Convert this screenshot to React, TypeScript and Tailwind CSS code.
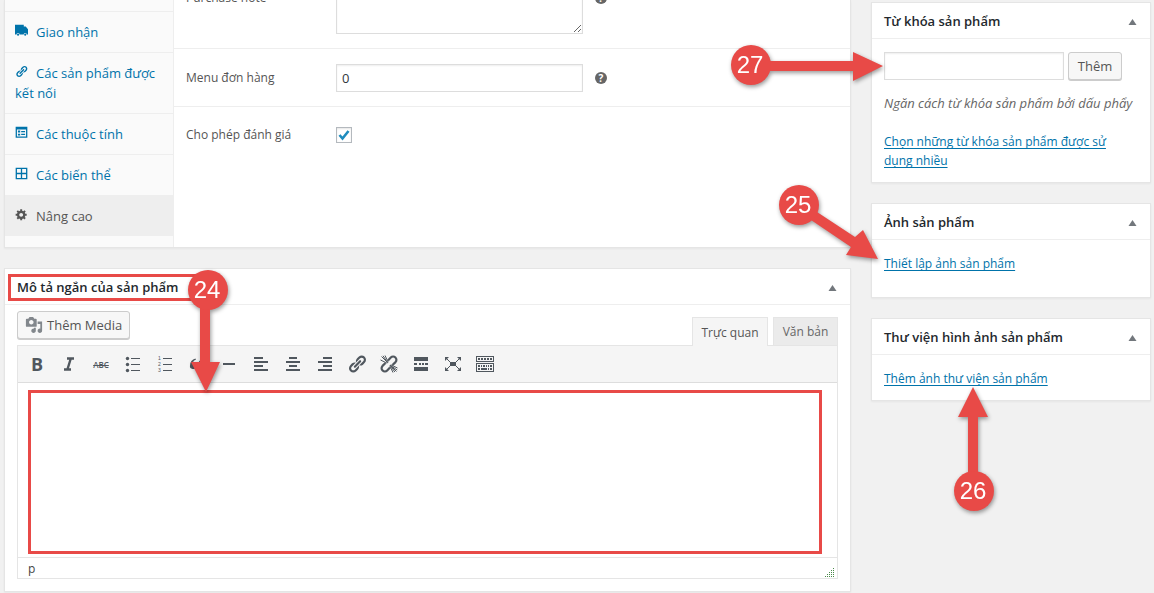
import React from "react";

interface IconProps {
  children: React.ReactNode;
  className?: string;
}

interface ChildrenProps {
  children: React.ReactNode;
}

const LINK_PATH =
  "M17.74 2.76c1.68 1.69 1.68 4.41 0 6.1l-1.53 1.52c-1.12 1.12-2.7 1.47-4.14 1.09l2.62-2.61.76-.77.76-.76c.84-.84.84-2.2 0-3.04-.84-.85-2.2-.85-3.04 0l-.77.76-3.38 3.38c-.37-1.44-.02-3.02 1.1-4.14l1.52-1.53c1.69-1.68 4.42-1.68 6.1 0zM8.59 13.43l5.34-5.34c.42-.42.42-1.1 0-1.52-.44-.43-1.13-.39-1.53 0l-5.33 5.34c-.42.42-.42 1.1 0 1.52.44.43 1.13.39 1.52 0zm-.76 2.29l4.14-4.15c.38 1.44.03 3.02-1.09 4.14l-1.52 1.53c-1.69 1.68-4.41 1.68-6.1 0-1.68-1.68-1.68-4.42 0-6.1l1.53-1.52c1.12-1.12 2.7-1.47 4.14-1.1l-4.14 4.15c-.85.84-.85 2.2 0 3.05.84.84 2.2.84 3.04 0z";

const Icon = ({ children, className = "size-5" }: IconProps) => (
  <svg viewBox="0 0 20 20" fill="currentColor" className={className} aria-hidden="true">
    {children}
  </svg>
);

const tabs = [
  {
    label: "Giao nhận",
    icon: <path d="M0 1h13.500v3h3l3.500 4v8h-2a2.300 2.300 0 0 0-4.600 0H7a2.300 2.300 0 0 0-4.600 0H0zM4.700 14.800a1.600 1.600 0 1 1 0 3.200 1.600 1.600 0 0 1 0-3.200zm11 0a1.600 1.600 0 1 1 0 3.200 1.600 1.600 0 0 1 0-3.200z" />,
  },
  { label: "Các sản phẩm được kết nối", icon: <path d={LINK_PATH} /> },
  {
    label: "Các thuộc tính",
    icon: (
      <path
        fillRule="evenodd"
        d="M1 1h18v17H1zM3 5.500v10.500h14v-10.500zM4.500 7h3.500v3h-3.500zM9.500 7.500h6v2h-6zM4.500 12h3.500v2.500h-3.500zM9.500 12h6v2h-6z"
      />
    ),
  },
  {
    label: "Các biến thể",
    icon: <path fillRule="evenodd" d="M1 1h18v18H1zM3 3v6h6V3zm8 0v6h6V3zM3 11v6h6v-6zm8 0v6h6v-6z" />,
  },
  {
    label: "Nâng cao",
    active: true,
    icon: (
      <path d="M18 12h-2.180c-.17.7-.44 1.350-.81 1.930l1.540 1.540-2.100 2.100-1.540-1.540c-.58.36-1.230.63-1.910.79V19H8v-2.180c-.68-.16-1.330-.43-1.910-.79l-1.540 1.540-2.120-2.120 1.540-1.540c-.36-.58-.63-1.230-.79-1.910H1V9.030h2.170c.16-.7.44-1.350.8-1.940L2.430 5.550l2.100-2.100 1.540 1.540c.58-.37 1.240-.64 1.930-.81V2h3v2.180c.68.16 1.330.43 1.910.79l1.540-1.540 2.120 2.120-1.540 1.540c.36.59.64 1.240.8 1.940H18V12zm-8.500 1.500c1.660 0 3-1.340 3-3s-1.340-3-3-3-3 1.340-3 3 1.340 3 3 3z" />
    ),
  },
];

const tools = [
  { name: "Đậm", icon: <span className="text-lg font-bold">B</span> },
  {
    name: "Nghiêng",
    icon: (
      <Icon>
        <path fill="none" stroke="currentColor" strokeWidth="2.400" d="M8 4.500h7M5 15.500h7M11.800 4.500l-3.400 11" />
      </Icon>
    ),
  },
  { name: "Gạch ngang chữ", icon: <span className="text-[8px] font-semibold line-through">ABC</span> },
  {
    name: "Danh sách",
    icon: (
      <Icon>
        <path d="M8 4h9v1H8zM8 10h9v1H8zM8 16h9v1H8z" />
        <circle cx="4.500" cy="4.500" r="1.700" />
        <circle cx="4.500" cy="10.500" r="1.700" />
        <circle cx="4.500" cy="16.500" r="1.700" />
      </Icon>
    ),
  },
  {
    name: "Danh sách đánh số",
    icon: (
      <Icon className="size-5 font-['Liberation_Sans',sans-serif] text-[5px]">
        <path d="M8 4h9v1H8zM8 10h9v1H8zM8 16h9v1H8z" />
        <text x="3" y="6">1</text>
        <text x="3" y="12">2</text>
        <text x="3" y="18">3</text>
      </Icon>
    ),
  },
  {
    name: "Trích dẫn",
    icon: (
      <Icon>
        <path d="M8.500 4.500C5 5.500 3 8 3 11.500A3 3 0 1 0 6 9c0-1.500 1-2.500 2.900-3.200zM16.500 4.500C13 5.500 11 8 11 11.500A3 3 0 1 0 14 9c0-1.500 1-2.500 2.900-3.200z" />
      </Icon>
    ),
  },
  { name: "Đường kẻ ngang", icon: <Icon><path d="M4 9h12v2H4z" /></Icon> },
  { name: "Canh trái", icon: <Icon><path d="M3 3h9v2H3zM3 7h14v2H3zM3 11h9v2H3zM3 15h14v2H3z" /></Icon> },
  { name: "Canh giữa", icon: <Icon><path d="M6 3h8v2H6zM3 7h14v2H3zM6 11h8v2H6zM3 15h14v2H3z" /></Icon> },
  { name: "Canh phải", icon: <Icon><path d="M8 3h9v2H8zM3 7h14v2H3zM8 11h9v2H8zM3 15h14v2H3z" /></Icon> },
  { name: "Chèn liên kết", icon: <Icon><path d={LINK_PATH} /></Icon> },
  {
    name: "Xóa liên kết",
    icon: (
      <Icon>
        <path
          fill="none"
          stroke="currentColor"
          strokeWidth="2.200"
          d="M9 6.500l2.800-2.900a3.200 3.200 0 0 1 4.700 4.500l-3 2.900M11 13.500l-2.800 2.900a3.200 3.200 0 0 1-4.700-4.500l3-2.900"
        />
        <path
          fill="none"
          stroke="currentColor"
          strokeWidth="1"
          d="M8.600 8.600L2.500 2.500M8.200 9.200L1.500 6M9.200 8.200L6 1.500M8.800 8.800L4 1.800M11.400 11.400l6.100 6.100M11.800 10.800l6.700 3.200M10.800 11.800l3.200 6.700M11.200 11.200l7 4.800M11 11l4.800 7"
        />
      </Icon>
    ),
  },
  {
    name: "Đọc tiếp",
    icon: <Icon><path d="M3 3h14v4H3zM3 9h3v2H3zM8 9h2v2H8zM11 9h2v2h-2zM14 9h3v2h-3zM3 13h14v4H3z" /></Icon>,
  },
  {
    name: "Toàn màn hình",
    icon: (
      <Icon>
        <path d="M7 8h6v4H7zM2 3h4L2 7zM18 3h-4l4 4zM2 17h4L2 13zM18 17h-4l4-4z" />
        <path fill="none" stroke="currentColor" strokeWidth="1" d="M3 4l4.500 4.500M17 4l-4.500 4.500M3 16l4.500-4.500M17 16l-4.500-4.500" />
      </Icon>
    ),
  },
  {
    name: "Thanh công cụ",
    icon: (
      <Icon>
        <path
          fillRule="evenodd"
          d="M1 2h18v6H1zM2 3v4h16V3zM1 9h18v9H1zM2 10v7h16v-7z"
        />
        <path d="M3 4h2v2H3zM6 4h2v2H6zM9 4h2v2H9zM12 4h2v2h-2zM15 4h2v2h-2zM3 11h2v2H3zM6 11h1v2H6zM8 11h2v2H8zM11 11h1v2h-1zM13 11h1v2h-1zM15 11h2v2h-2zM3 14h2v2H3zM6 14h6v2H6zM13 14h1v2h-1zM15 14h2v2h-2z" />
      </Icon>
    ),
  },
];

const HelpTip = () => (
  <button type="button" aria-label="Trợ giúp" className="ml-3 flex size-3 items-center justify-center rounded-full bg-[#666] text-[10px] leading-3 font-bold text-white">
    ?
  </button>
);

const BoxHeader = ({ title, children }: { title: string; children?: React.ReactNode }) => (
  <header className="relative flex h-9 items-center justify-between border-b border-[#eee] px-3 pt-0.5">
    <h2 className="font-semibold text-[#23282d]">{title}</h2>
    <button type="button" aria-label="Thu gọn" className="text-[#72777c]">
      <svg viewBox="0 0 10 8" fill="currentColor" className="h-2 w-2.5" aria-hidden="true">
        <path d="M4.500 1l4 6h-8z" />
      </svg>
    </button>
    {children}
  </header>
);

const Box = ({ title, children }: { title: string; children: React.ReactNode }) => (
  <section className="relative border border-[#e5e5e5] bg-white shadow-xs">
    <BoxHeader title={title} />
    {children}
  </section>
);

const BoxLink = ({ children }: ChildrenProps) => (
  <a href="#" className="text-[12px] text-[#0073aa] underline [text-decoration-skip-ink:none] [text-underline-offset:2px]">
    {children}
  </a>
);

interface CalloutProps {
  num: number;
  cx: number;
  cy: number;
  arrow: string;
  className: string;
}

// Numbered red marker with an arrow, laid over the page
const Callout = ({ num, cx, cy, arrow, className }: CalloutProps) => (
  <svg className={`pointer-events-none absolute z-10 overflow-visible drop-shadow-[1px_2px_2px_rgba(0,0,0,0.4)] ${className}`}>
    <path d={arrow} fill="#e84a47" />
    <circle cx={cx} cy={cy} r="20" fill="#e84a47" />
    <text
      x={cx - 1}
      y={cy + 8}
      textAnchor="middle"
      fill="#fff"
      className="font-['Liberation_Sans',sans-serif] text-2xl"
    >
      {num}
    </text>
  </svg>
);

const ProductData = () => (
  <section className="flex border border-t-0 border-[#e5e5e5] bg-white shadow-xs">
    <nav className="w-[169px] shrink-0 border-r border-[#eee] bg-[#fafafa] pt-[11px] pb-[11px]">
      <ul>
        {tabs.map((tab) => (
          <li key={tab.label} className="border-t border-[#eee]">
            <a
              href="#"
              className={`block p-2.5 leading-5 ${tab.active ? "bg-[#eee] text-[#555]" : "text-[#0073aa]"}`}
            >
              <Icon className="mr-2 inline-block size-[13px] align-baseline">{tab.icon}</Icon>
              {tab.label}
            </a>
          </li>
        ))}
      </ul>
    </nav>
    <form className="-mt-5 min-w-0 flex-1 overflow-hidden text-[12px] leading-4 text-[#555]">
      <div className="flex border-b border-[#eee] pb-3.5 pl-3">
        <label htmlFor="note" className="w-[150px] pt-2.5">Purchase note</label>
        <textarea id="note" className="h-[54px] w-[247px] border border-[#ddd] bg-white shadow-[inset_0_1px_2px_rgba(0,0,0,0.07)]" />
        <div className="pt-3"><HelpTip /></div>
      </div>
      <div className="flex items-center border-b border-[#eee] pt-[15px] pb-3.5 pl-3">
        <label htmlFor="order" className="w-[150px]">Menu đơn hàng</label>
        <input
          id="order"
          type="text"
          defaultValue="0"
          className="h-7 w-[247px] border border-[#ddd] px-[5px] text-[13px] text-[#32373c] shadow-[inset_0_1px_2px_rgba(0,0,0,0.07)]"
        />
        <HelpTip />
      </div>
      <div className="flex items-center py-5 pl-3">
        <label htmlFor="reviews" className="w-[150px]">Cho phép đánh giá</label>
        <span className="relative flex">
          <input
            id="reviews"
            type="checkbox"
            defaultChecked
            className="peer size-4 appearance-none border border-[#b4b9be] bg-white shadow-[inset_0_1px_2px_rgba(0,0,0,0.1)]"
          />
          <svg
            viewBox="0 0 16 16"
            fill="none"
            stroke="#1e8cbe"
            strokeWidth="2.600"
            className="pointer-events-none absolute inset-0 hidden size-4 peer-checked:block"
          >
            <path d="M3.500 8l3 3.500 6-7.500" />
          </svg>
        </span>
      </div>
    </form>
  </section>
);

const ShortDescription = () => (
  <section className="relative border border-[#e5e5e5] bg-white shadow-xs">
    <BoxHeader title="Mô tả ngắn của sản phẩm">
      <span className="absolute top-[5px] left-[3px] h-[27px] w-[200px] border-3 border-[#e84a47]" />
    </BoxHeader>
    <div className="px-3 pt-1.5 pb-3">
      <div className="flex items-end justify-between">
        <button
          type="button"
          className="mb-1.5 flex h-7 items-center gap-1 rounded-[3px] border border-[#ccc] bg-[#f7f7f7] px-[7px] text-[#555] shadow-[0_1px_0_#ccc]"
        >
          <Icon className="size-[18px] text-[#82878c]">
            <path d="M13 11V4c0-.55-.45-1-1-1h-1.670L9 1H5L3.670 3H2c-.55 0-1 .45-1 1v7c0 .55.45 1 1 1h10c.55 0 1-.45 1-1zM7 4.500c1.380 0 2.500 1.120 2.500 2.500S8.380 9.500 7 9.500 4.500 8.380 4.500 7 5.620 4.500 7 4.500zM14 6h5v10.500c0 1.380-1.120 2.500-2.500 2.500S14 17.880 14 16.500s1.120-2.500 2.500-2.500c.17 0 .34.02.5.05V9h-3V6zm-4 8.050V13h2v3.500c0 1.380-1.120 2.500-2.500 2.500S7 17.880 7 16.500 8.120 14 9.500 14c.17 0 .34.02.5.05z" />
          </Icon>
          Thêm Media
        </button>
        <div className="flex gap-[5px] text-[12px] text-[#555]">
          <button type="button" className="relative z-1 -mb-px h-[29px] w-[76px] border border-b-0 border-[#e5e5e5] bg-[#f5f5f5]">
            Trực quan
          </button>
          <button type="button" className="h-7 w-[65px] border border-b-0 border-[#e5e5e5] bg-[#ebebeb] text-[#666]">
            Văn bản
          </button>
        </div>
      </div>
      <div className="border border-[#e5e5e5]">
        <div className="flex h-[37px] items-center border-b border-[#ddd] bg-[#f5f5f5] px-[3px] text-[#50575e]">
          {tools.map((tool) => (
            <button key={tool.name} type="button" aria-label={tool.name} className="flex size-8 items-center justify-center">
              {tool.icon}
            </button>
          ))}
        </div>
        <div className="relative h-[174px]">
          <textarea aria-label="Mô tả ngắn" className="block size-full resize-none px-4 py-3 outline-none" />
          <span className="pointer-events-none absolute top-[7px] right-[15px] bottom-[3px] left-2.5 border-3 border-[#e84a47]" />
        </div>
        <div className="flex h-[21px] items-center justify-between border-t border-[#e5e5e5] pr-[3px] pl-2.5 text-[12px] text-[#444]">
          p
          <svg viewBox="0 0 10 10" className="size-2.5 self-end text-[#4a8a4a]" fill="currentColor" aria-hidden="true">
            <path d="M9 0h1v1H9zM9 2h1v1H9zM7 2h1v1H7zM9 4h1v1H9zM7 4h1v1H7zM5 4h1v1H5zM9 6h1v1H9zM7 6h1v1H7zM5 6h1v1H5zM3 6h1v1H3zM9 8h1v1H9zM7 8h1v1H7zM5 8h1v1H5zM3 8h1v1H3zM1 8h1v1H1z" />
          </svg>
        </div>
      </div>
    </div>
    <Callout
      num={24}
      cx={28}
      cy={21}
      arrow="M20 30h10v63h10L26 123L11 93h9z"
      className="top-0 left-[175px] h-[125px] w-[50px]"
    />
  </section>
);

const App = () => {
  return (
    <div className="min-h-screen overflow-hidden bg-[#f1f1f1] pr-[3px] pl-1 font-['Open_Sans','Noto_Sans',sans-serif] text-[13px] leading-[19px] text-[#444]">
      <div className="flex items-start gap-5">
        <main className="flex min-w-0 flex-1 flex-col gap-5">
          <ProductData />
          <ShortDescription />
        </main>
        <aside className="flex w-[280px] shrink-0 flex-col gap-5 pt-0.5">
          <Box title="Từ khóa sản phẩm">
            <div className="px-3 pt-[13px] pb-3">
              <div className="flex gap-1">
                <input
                  type="text"
                  aria-label="Từ khóa sản phẩm"
                  className="h-7 w-[180px] border border-[#ddd] px-[5px] shadow-[inset_0_1px_2px_rgba(0,0,0,0.07)]"
                />
                <button
                  type="button"
                  className="h-7 w-[54px] rounded-[3px] border border-[#ccc] bg-[#f7f7f7] text-[#555] shadow-[0_1px_0_#ccc]"
                >
                  Thêm
                </button>
              </div>
              <p className="mt-3.5 whitespace-nowrap text-[#666] italic">Ngăn cách từ khóa sản phẩm bởi dấu phẩy</p>
              <p className="mt-[19px] pr-5">
                <BoxLink>Chọn những từ khóa sản phẩm được sử dụng nhiều</BoxLink>
              </p>
            </div>
            <Callout
              num={27}
              cx={25}
              cy={25}
              arrow="M40 21H127V12L157 26L127 41V31H40z"
              className="top-[37px] -left-[146px] h-[50px] w-[160px]"
            />
          </Box>
          <Box title="Ảnh sản phẩm">
            <p className="px-3 pt-3.5 pb-6">
              <BoxLink>Thiết lập ảnh sản phẩm</BoxLink>
            </p>
            <Callout
              num={25}
              cx={25}
              cy={25}
              arrow="M43 32L81 57L89 50L104 79L72 75L77 67L37 40z"
              className="-top-[24px] -left-[98px] h-[85px] w-[110px]"
            />
          </Box>
          <Box title="Thư viện hình ảnh sản phẩm">
            <p className="px-3 pt-3.5 pb-3">
              <BoxLink>Thêm ảnh thư viện sản phẩm</BoxLink>
            </p>
            <Callout
              num={26}
              cx={25}
              cy={104}
              arrow="M24 0L39 30H29V90H19V30H9z"
              className="top-[68px] left-[77px] h-[125px] w-[50px]"
            />
          </Box>
        </aside>
      </div>
    </div>
  );
};

export default App;
